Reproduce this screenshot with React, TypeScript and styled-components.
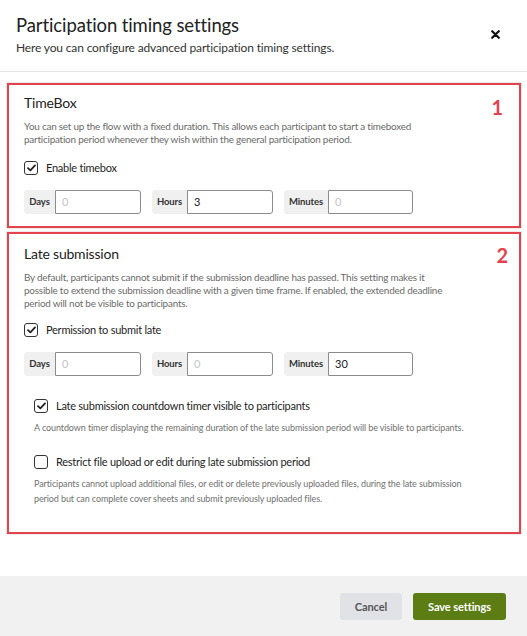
import React from 'react';
import styled, { createGlobalStyle } from 'styled-components';

const Global = createGlobalStyle`
  html, body { margin: 0; padding: 0; background: #fff; }
  body { font-family: Lato, "Noto Sans", sans-serif; color: #222; }
  * { box-sizing: border-box; }
`;

const Modal = styled.div`
  width: 527px;
  height: 636px;
  display: flex;
  flex-direction: column;
  background: #fff;
`;

const Header = styled.header`
  height: 72px;
  flex-shrink: 0;
  display: flex;
  align-items: flex-start;
  justify-content: space-between;
  padding: 13px 27px 0 16px;
  border-bottom: 1px solid #e3e3e3;
`;

const TitleBlock = styled.div`
  display: flex;
  flex-direction: column;
  gap: 3px;
`;

const Title = styled.h1`
  margin: 0;
  font-size: 18.5px;
  font-weight: 400;
  letter-spacing: -0.1px;
  line-height: 24px;
  color: #222;
`;

const Subtitle = styled.p`
  margin: 0;
  font-size: 12px;
  letter-spacing: -0.15px;
  line-height: 16px;
  color: #333;
`;

const CloseButton = styled.button`
  border: 0;
  background: none;
  padding: 0;
  margin-top: 16px;
  width: 10px;
  height: 10px;
  display: flex;
  align-items: center;
  justify-content: center;
  cursor: pointer;
`;

const Body = styled.main`
  flex: 1;
  display: flex;
  flex-direction: column;
  gap: 4px;
  padding: 11px 6px 0 7px;
`;

const Box = styled.section<{ $pt: number; $pb: number }>`
  position: relative;
  border: 2.5px solid #e6424d;
  box-shadow: 0 0 0 1px rgba(0, 0, 0, 0.08);
  padding: ${(p) => p.$pt}px 15px ${(p) => p.$pb}px 15px;
`;

const Badge = styled.span<{ $top: number; $right: number }>`
  position: absolute;
  top: ${(p) => p.$top}px;
  right: ${(p) => p.$right}px;
  font-size: 20px;
  font-weight: 700;
  color: #e6424d;
  line-height: 20px;
`;

const SectionTitle = styled.h2`
  margin: 0 0 8px;
  font-size: 14px;
  font-weight: 400;
  letter-spacing: -0.2px;
  line-height: 18px;
  color: #222;
`;

const Desc = styled.p`
  margin: 0;
  font-size: 9.9px;
  letter-spacing: -0.2px;
  line-height: 13px;
  color: #6a6a6a;
  white-space: nowrap;
`;

const CheckRow = styled.label<{ $mt: number }>`
  display: flex;
  align-items: center;
  gap: 8px;
  margin-top: ${(p) => p.$mt}px;
  font-size: 11px;
  letter-spacing: -0.25px;
  color: #1e1e1e;
  line-height: 16px;
`;

const Box14 = styled.span`
  width: 14px;
  height: 14px;
  border: 1.5px solid #333;
  border-radius: 3px;
  display: flex;
  align-items: center;
  justify-content: center;
  background: #fff;
  flex-shrink: 0;
`;

const InputRow = styled.div`
  display: flex;
  gap: 11px;
  margin-top: 14px;
`;

const InputGroup = styled.div`
  display: flex;
  height: 24px;
`;

const Addon = styled.span<{ $w: number }>`
  width: ${(p) => p.$w}px;
  background: #f0f0f0;
  border-radius: 3px 0 0 3px;
  display: flex;
  align-items: center;
  justify-content: center;
  font-size: 9.5px;
  letter-spacing: -0.1px;
  font-weight: 700;
  color: #333;
`;

const Field = styled.input<{ $w: number }>`
  width: ${(p) => p.$w}px;
  height: 24px;
  border: 1px solid #8c8c8c;
  border-radius: 0 3px 3px 0;
  padding: 0 6px;
  font-family: inherit;
  font-size: 11px;
  color: #222;
  outline: none;
  &::placeholder { color: #c4c4c4; }
`;

const SubOptions = styled.div`
  padding-left: 10px;
  display: flex;
  flex-direction: column;
`;

const Help = styled.p`
  margin: 6.5px 0 0;
  font-size: 9px;
  letter-spacing: -0.1px;
  line-height: 15px;
  color: #717171;
  white-space: nowrap;
`;

const Footer = styled.footer`
  height: 60px;
  flex-shrink: 0;
  background: #f1f1f1;
  display: flex;
  align-items: center;
  justify-content: flex-end;
  gap: 11px;
  padding: 0 21px 0 0;
`;

const Button = styled.button<{ $primary?: boolean }>`
  height: 27px;
  width: ${(p) => (p.$primary ? 93 : 62)}px;
  padding: 0;
  border: 0;
  border-radius: 3px;
  font-family: inherit;
  font-size: 11px;
  letter-spacing: -0.1px;
  font-weight: 700;
  background: ${(p) => (p.$primary ? '#5c7d13' : '#e1e2e5')};
  color: ${(p) => (p.$primary ? '#fff' : '#555')};
  cursor: pointer;
`;

const Check = ({ checked }: { checked: boolean }) => (
  <Box14>
    {checked && (
      <svg width="9" height="8" viewBox="0 0 9 8">
        <path d="M1 4.2 L3.4 6.4 L8 1.4" fill="none" stroke="#222" strokeWidth="1.8" strokeLinecap="round" strokeLinejoin="round" />
      </svg>
    )}
  </Box14>
);

const TimeInputs = ({ days, hours, minutes }: { days: string; hours: string; minutes: string }) => (
  <InputRow>
    <InputGroup>
      <Addon $w={31}>Days</Addon>
      <Field $w={86} placeholder="0" defaultValue={days} />
    </InputGroup>
    <InputGroup>
      <Addon $w={35}>Hours</Addon>
      <Field $w={86} placeholder="0" defaultValue={hours} />
    </InputGroup>
    <InputGroup>
      <Addon $w={44}>Minutes</Addon>
      <Field $w={85} placeholder="0" defaultValue={minutes} />
    </InputGroup>
  </InputRow>
);

export default function App() {
  return (
    <>
      <Global />
      <Modal>
        <Header>
          <TitleBlock>
            <Title>Participation timing settings</Title>
            <Subtitle>Here you can configure advanced participation timing settings.</Subtitle>
          </TitleBlock>
          <CloseButton aria-label="Close">
            <svg width="9" height="9" viewBox="0 0 9 9">
              <path d="M1.2 1.2 L7.8 7.8 M7.8 1.2 L1.2 7.8" stroke="#111" strokeWidth="2.2" strokeLinecap="round" />
            </svg>
          </CloseButton>
        </Header>
        <Body>
          <Box $pt={9} $pb={12.5}>
            <Badge $top={12} $right={16}>1</Badge>
            <SectionTitle>TimeBox</SectionTitle>
            <Desc>
              You can set up the flow with a fixed duration. This allows each participant to start a timeboxed
              <br />
              participation period whenever they wish within the general participation period.
            </Desc>
            <CheckRow $mt={13.5}>
              <Check checked />
              Enable timebox
            </CheckRow>
            <TimeInputs days="" hours="3" minutes="" />
          </Box>
          <Box $pt={11} $pb={26}>
            <Badge $top={11} $right={11}>2</Badge>
            <SectionTitle>Late submission</SectionTitle>
            <Desc>
              By default, participants cannot submit if the submission deadline has passed. This setting makes it
              <br />
              possible to extend the submission deadline with a given time frame. If enabled, the extended deadline
              <br />
              period will not be visible to participants.
            </Desc>
            <CheckRow $mt={11.5}>
              <Check checked />
              Permission to submit late
            </CheckRow>
            <TimeInputs days="" hours="" minutes="30" />
            <SubOptions>
              <CheckRow $mt={22}>
                <Check checked />
                Late submission countdown timer visible to participants
              </CheckRow>
              <Help>
                A countdown timer displaying the remaining duration of the late submission period will be visible to participants.
              </Help>
              <CheckRow $mt={18.5}>
                <Check checked={false} />
                Restrict file upload or edit during late submission period
              </CheckRow>
              <Help>
                Participants cannot upload additional files, or edit or delete previously uploaded files, during the late submission
                <br />
                period but can complete cover sheets and submit previously uploaded files.
              </Help>
            </SubOptions>
          </Box>
        </Body>
        <Footer>
          <Button>Cancel</Button>
          <Button $primary>Save settings</Button>
        </Footer>
      </Modal>
    </>
  );
}
